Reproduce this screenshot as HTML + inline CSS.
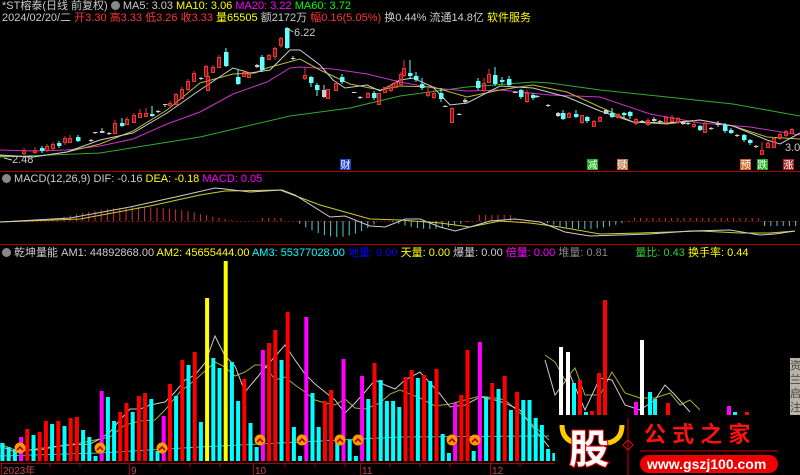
<!DOCTYPE html>
<html><head><meta charset="utf-8">
<style>
body{margin:0;background:#000;width:800px;height:475px;overflow:hidden;font-family:"Liberation Sans","Noto Sans CJK SC",sans-serif;}
svg{position:absolute;left:0;top:0}
.t{position:absolute;font-size:11px;white-space:nowrap;line-height:12px}
</style></head><body>
<svg id="s" width="800" height="475" xmlns="http://www.w3.org/2000/svg"></svg>
<div class="t" style="left:2px;top:0px;color:#ccc">*ST榕泰(日线 前复权) <span style="display:inline-block;width:9px;height:9px;border-radius:50%;background:#888;vertical-align:-1px"></span> MA5: 3.03 <span style="color:#ff0">MA10: 3.06</span> <span style="color:#f0f">MA20: 3.22</span> <span style="color:#0f0">MA60: 3.72</span></div>
<div class="t" style="left:2px;top:12px;color:#ccc">2024/02/20/二 <span style="color:#f33">开3.30 高3.33 低3.26 收3.33</span> <span style="color:#ff0">量65505</span> 额2172万 <span style="color:#f33">幅0.16(5.05%)</span> 换0.44% 流通14.8亿 <span style="color:#ff0">软件服务</span></div>
<div class="t" style="left:2px;top:173px;color:#ccc"><span style="display:inline-block;width:9px;height:9px;border-radius:50%;background:#888;vertical-align:-1px"></span> MACD(12,26,9) DIF: -0.16 <span style="color:#ff0">DEA: -0.18</span> <span style="color:#f0f">MACD: 0.05</span></div>
<div class="t" style="left:2px;top:247px;color:#ccc"><span style="display:inline-block;width:9px;height:9px;border-radius:50%;background:#888;vertical-align:-1px"></span> 乾坤量能 AM1: 44892868.00 <span style="color:#ff0">AM2: 45655444.00</span> <span style="color:#0ff">AM3: 55377028.00</span> <span style="color:#00f">地量: 0.00</span> <span style="color:#ff0">天量: 0.00</span> 爆量: 0.00 <span style="color:#f0f">倍量: 0.00</span> <span style="color:#888">堆量: 0.81</span> &nbsp;&nbsp;&nbsp;&nbsp;&nbsp;&nbsp;&nbsp; <span style="color:#3c3">量比: 0.43</span> <span style="color:#ff0">换手率: 0.44</span></div>
<script>
var s=document.getElementById('s'),h='';
function L(x1,y1,x2,y2,c,w,d){h+='<line x1="'+x1+'" y1="'+y1+'" x2="'+x2+'" y2="'+y2+'" stroke="'+c+'" stroke-width="'+(w||1)+'"'+(d?' stroke-dasharray="'+d+'"':'')+'/>';}
function P(p,c){h+='<polyline fill="none" stroke="'+c+'" stroke-width="1" points="'+p+'"/>';}
function R(x,y,w,hh,f,st){h+='<rect x="'+x+'" y="'+y+'" width="'+w+'" height="'+hh+'" fill="'+f+'"'+(st?' stroke="'+st+'"':'')+'/>';}
function T(x,y,t,c,sz,ex){h+='<text x="'+x+'" y="'+y+'" fill="'+c+'" font-size="'+(sz||11)+'" '+(ex||'')+'>'+t+'</text>';}
// separators
L(0,171.5,800,171.5,'#a00');L(0,244.5,800,244.5,'#a00');L(0,463.5,800,463.5,'#a00');
// volume MA lines / cyan
P('0,456 100,453 200,447 300,442 400,437 549,436','#3cc');
P('0,444 15,450 40,450 60,446 80,443 95,440 110,437 125,425 140,421 155,420 165,410 180,392 195,380 205,371 215,362 225,367 235,376 245,372 255,365 265,365 275,380 285,377 295,385 305,392 315,400 325,403 335,405 345,399 355,408 365,409 380,403 390,394 400,390 420,398 435,406 450,404 465,400 480,396 495,398 505,400 520,413 535,427 549,440','#aa3');
P('0,446 15,452 30,450 50,447 70,445 90,444 100,439 110,432 120,420 130,409 140,409 150,405 165,402 175,392 185,380 195,375 205,363 215,336 225,356 235,366 245,392 255,380 265,368 285,345 295,360 305,374 315,384 325,392 335,400 345,413 355,403 365,392 375,380 385,385 395,389 405,380 420,372 430,383 440,394 450,407 465,405 480,397 495,400 505,403 520,410 535,430 549,447','#ccc');
P('545,355 555,362 565,380 575,368 585,395 600,395 612,372 625,393 640,398 655,398 670,393 680,405 690,400 700,410','#aa3');
P('545,360 555,395 570,375 585,410 600,378 612,380 625,405 640,410 655,400 665,385 675,395 690,412','#ccc');
// volume bars
var vb=[[443,'c'],[447,'c'],[449,'c'],[437,'m'],[429,'r'],[435,'c'],[432,'r'],[421,'r'],[424,'c'],[421,'r'],[426,'c'],[418,'r'],[417,'r'],[430,'c'],[437,'c'],[456,'c'],[391,'m'],[397,'c'],[421,'c'],[412,'r'],[403,'r'],[412,'c'],[396,'r'],[393,'r'],[399,'c'],[451,'c'],[416,'m'],[384,'r'],[396,'c'],[360,'r'],[365,'c'],[352,'r'],[422,'c'],[298,'y'],[358,'c'],[368,'c'],[261,'y'],[362,'c'],[401,'c'],[379,'r'],[423,'c'],[447,'c'],[350,'m'],[343,'r'],[330,'r'],[360,'c'],[312,'r'],[427,'c'],[456,'c'],[317,'m'],[393,'c'],[427,'c'],[401,'r'],[390,'r'],[437,'c'],[359,'m'],[440,'c'],[456,'c'],[376,'m'],[399,'c'],[363,'r'],[380,'c'],[401,'c'],[401,'c'],[407,'c'],[377,'r'],[370,'r'],[378,'c'],[375,'r'],[381,'c'],[369,'r'],[434,'c'],[453,'c'],[403,'m'],[395,'r'],[350,'r'],[451,'c'],[342,'m'],[397,'c'],[383,'r'],[389,'c'],[376,'r'],[410,'c'],[392,'r'],[400,'c'],[400,'c'],[418,'c'],[425,'c'],[449,'c'],[453,'c']];
var col={c:'#0ff',r:'#f00',m:'#f0f',y:'#ff0',w:'#fff'};
vb.forEach(function(b,i){var x=0.5+i*6.2;R(x,b[0],4,461-b[0],col[b[1]]);});
[[559,347,'w'],[566,352,'w'],[572,383,'c'],[578,380,'r'],[584,412,'c'],[590,411,'r'],[597,373,'r'],[603,300,'r'],[634,402,'m'],[640,340,'w'],[648,392,'c'],[653,399,'c'],[666,403,'r'],[727,406,'m'],[733,412,'c'],[745,412,'r']].forEach(function(b){R(b[0],b[1],4,461-b[1],col[b[2]]);});
// markers
[20,100,162,260,302,340,358,452,475].forEach(function(x){h+='<circle cx="'+x+'" cy="'+(x<200?448:440)+'" r="5.5" fill="#f90"/><path d="M'+(x-3)+' '+((x<200?448:440)+2)+' l3 -3 l3 3" stroke="#a00" stroke-width="1.6" fill="none"/>';});
// date axis
[[3,'2023年'],[131,'9'],[255,'10'],[362,'11'],[492,'12']].forEach(function(d){L(d[0]-1.5,463,d[0]-1.5,475,'#a00');T(d[0],474,d[1],'#c44',10);});
[50,80,160,190,220,285,315,345,390,420,450,520].forEach(function(x){L(x,464,x,467,'#a00');});
// MACD
L(0,221.5,800,221.5,'#800',1,'2,2');
for(var x=2;x<800;x+=6.2){var v=0;
 if(x>45&&x<235)v=Math.sin((x-45)/190*Math.PI)*14*(x>200?0.9:1);
 else if(x>240&&x<290)v=x>260&&x<282?3:0;
 else if(x>295&&x<380)v=-Math.sin((x-295)/85*Math.PI)*16;
 else if(x>390&&x<470)v=-Math.sin((x-390)/80*Math.PI)*8;
 else if(x>478&&x<515)v=6;
 else if(x>540&&x<630)v=-Math.sin((x-540)/90*Math.PI)*8;
 else if(x>630&&x<760)v=3;
 else if(x>760)v=-5;
 if(Math.abs(v)>0.5)L(x,221,x,221-v,v>0?'#c33':'#5cc');}
P('0,222 80,219 150,206 200,195 225,191 280,190 320,205 370,219 400,220 440,223 470,227 500,221 530,223 560,227 600,234 640,233 700,231 740,233 770,233 795,231','#cc3');
P('0,222 70,218 130,207 180,196 215,188 225,189 250,192 282,190 295,195 330,217 345,216 370,226 385,227 405,219 420,219 440,227 455,231 470,227 490,221 515,219 540,222 565,232 590,236 620,235 650,234 690,231 730,230 760,235 775,234 795,231','#ccc');
// main MAs
P('0,157 100,153 200,137 290,116 350,108 400,96 467,87 533,82 550,83 600,90 667,97 733,104 800,116','#3a3');
P('0,150 33,151 67,150 100,146 133,139 167,124 200,112 233,94 267,82 290,68 300,67 333,69 367,74 400,82 433,88 467,91 500,90 550,95 600,97 650,114 700,123 750,127 800,135','#c3c');
P('0,156 33,157 67,152 100,144 133,131 167,110 200,83 233,74 255,73 267,68 300,59 320,70 350,84 380,90 400,86 433,87 467,97 500,90 533,85 567,92 600,107 633,122 667,124 700,120 733,126 767,137 800,139','#bb3');
P('0,155 33,157 67,152 100,140 133,133 167,113 200,90 233,68 250,73 270,70 290,50 300,50 320,65 333,80 345,88 367,85 380,91 400,80 413,78 433,87 450,105 467,103 500,86 533,88 567,97 600,111 633,122 667,123 700,120 733,126 767,140 780,144 800,133','#ccc');
// candles [x,top,bot,hi,lo,type]
var cd=[[22,150,153,148,155,'r'],[33,150,152,147,154,'r'],[40,148,151,146,153,'g'],[45,146,150,144,152,'r'],[51,144,148,142,150,'r'],[57,143,146,141,148,'g'],[63,138,142,136,145,'r'],[68,138,142,135,143,'r'],[76,137,141,135,142,'g'],[89,140,141,139,142,'w'],[93,132,133,132,134,'w'],[100,131,133,128,133,'w'],[107,133,134,132,135,'w'],[113,123,133,120,134,'r'],[120,123,126,118,127,'g'],[125,119,124,117,125,'r'],[132,115,122,113,123,'r'],[138,113,117,109,118,'r'],[144,113,116,108,117,'r'],[150,114,116,106,117,'g'],[156,111,112,110,113,'w'],[163,104,105,104,107,'w'],[168,103,105,101,106,'r'],[174,94,104,93,105,'r'],[180,89,98,87,99,'r'],[186,81,89,79,91,'r'],[192,73,81,71,82,'r'],[199,78,79,77,80,'w'],[204,66,76,65,77,'r'],[206,76,90,72,91,'r'],[211,67,72,65,73,'r'],[217,57,67,55,68,'r'],[224,52,66,48,67,'g'],[236,77,84,70,85,'g'],[242,72,76,70,77,'r'],[247,74,77,72,78,'r'],[255,65,67,64,68,'w'],[260,57,70,55,72,'g'],[267,55,59,54,60,'r'],[273,48,56,47,60,'r'],[279,38,45,37,48,'r'],[285,28,48,27,49,'g'],[291,58,58,56,60,'w'],[303,75,78,67,80,'r'],[309,77,83,76,87,'g'],[315,85,90,83,96,'g'],[322,90,97,85,98,'w'],[326,89,98,89,99,'r'],[334,83,90,81,91,'r'],[340,77,82,74,84,'g'],[352,92,93,92,93,'w'],[358,97,98,96,99,'w'],[366,93,97,92,98,'r'],[372,93,98,91,100,'g'],[377,93,104,93,105,'r'],[383,87,92,87,93,'r'],[389,85,90,84,92,'r'],[394,82,87,80,87,'r'],[399,74,84,72,85,'r'],
[402,68,75,60,77,'r'],[408,73,76,60,79,'g'],[414,76,80,72,82,'g'],[420,84,88,78,90,'g'],[426,92,95,88,97,'r'],[432,93,97,90,99,'r'],[439,93,99,88,102,'g'],[443,106,106,105,107,'w'],[450,108,122,107,123,'r'],[457,114,114,113,115,'w'],[463,100,102,98,104,'w'],[476,81,88,78,90,'g'],[482,83,90,78,92,'r'],[487,74,82,69,83,'r'],[493,75,84,67,86,'g'],[500,80,82,77,84,'g'],[507,79,85,76,86,'g'],[513,92,92,91,93,'w'],[519,90,97,89,99,'g'],[525,93,101,90,103,'r'],[531,95,98,93,100,'g'],[535,96,97,95,98,'w'],[546,105,106,104,107,'w'],[556,113,116,112,117,'w'],[561,113,119,110,120,'g'],[567,113,117,112,118,'r'],[574,114,117,110,118,'g'],[580,115,122,115,124,'r'],[585,117,121,116,123,'g'],[592,121,126,120,127,'r'],[598,117,121,116,122,'r'],[604,110,114,109,114,'w'],[610,113,117,108,118,'g'],[616,114,117,113,119,'r'],[622,113,115,112,118,'g'],[628,112,116,111,119,'g'],[634,119,123,118,125,'r'],[640,121,122,120,123,'w'],[646,120,124,118,126,'r'],[652,119,121,117,123,'w'],[658,121,122,120,124,'w'],[664,117,122,116,123,'r'],[670,117,121,115,122,'r'],[676,118,122,117,124,'r'],[681,122,124,121,125,'w'],[686,123,124,122,125,'w'],[692,124,126,120,128,'r'],[698,126,130,125,131,'g'],[703,123,132,122,133,'r'],[709,128,129,127,130,'w'],[716,123,125,121,127,'w'],[723,125,131,123,133,'g'],[729,130,133,128,134,'g'],[735,135,136,134,137,'w'],[742,135,140,134,142,'g'],[748,140,143,139,145,'g'],[754,146,147,145,148,'w'],[760,150,154,142,155,'r'],[766,143,147,141,148,'r'],[772,138,147,137,148,'r'],[778,134,138,132,140,'r'],[784,131,135,130,137,'r'],[790,129,133,128,134,'r']];
cd.forEach(function(c){var cl=c[5]=='r'?'#e33':c[5]=='g'?'#6ff':'#ccc';L(c[0]+2,c[3],c[0]+2,c[4],cl);
 if(c[5]=='r')R(c[0]+0.5,c[1]+0.5,3,Math.max(c[2]-c[1],1),'none',cl);else R(c[0],c[1],4.5,Math.max(c[2]-c[1],1),cl);});
// labels
L(287,28,293,32,'#ccc');T(294,36,'6.22','#ccc',11);
L(4,158,12,160,'#ccc');T(12,163,'2.48','#ccc',11);T(785,151,'3.0','#ccc',11);
[[340,'#24c','财'],[587,'#2a2','减'],[617,'#b74','赎'],[740,'#c62','预'],[757,'#2a2','跌'],[783,'#a22','涨']].forEach(function(m){R(m[0],159,11,11,m[1]);T(m[0]+0.5,168.5,m[2],'#fff',10);});
// right side gray panel
R(790,358,10,57,'#b8b4a8');['资','兰','启','注'].forEach(function(c,i){T(790,369+i*14,c,'#444',11);});
// watermark
R(555,415,245,60,'#000');
h+='<path d="M562 425 q0 15 14 18 M622 425 q0 15 -14 18" stroke="#fc0" stroke-width="5" fill="none"/>';
T(569,463,'股','#fff',40,'font-weight="bold" stroke="#e00" stroke-width="2" paint-order="stroke"');
L(628,418,628,475,'#c00');h+='<path d="M628 440 l5 5 -5 5 -5 -5z" fill="none" stroke="#e00"/>';
T(644,442,'公 式 之 家','#f11',22,'font-weight="bold"');
L(640,451,778,451,'#c00');
h+='<rect x="640" y="455" width="138" height="18" rx="9" fill="#e00"/>';
T(647,469,'www.gszj100.com','#fff',14,'font-weight="bold"');
s.innerHTML=h;
</script>
</body></html>
